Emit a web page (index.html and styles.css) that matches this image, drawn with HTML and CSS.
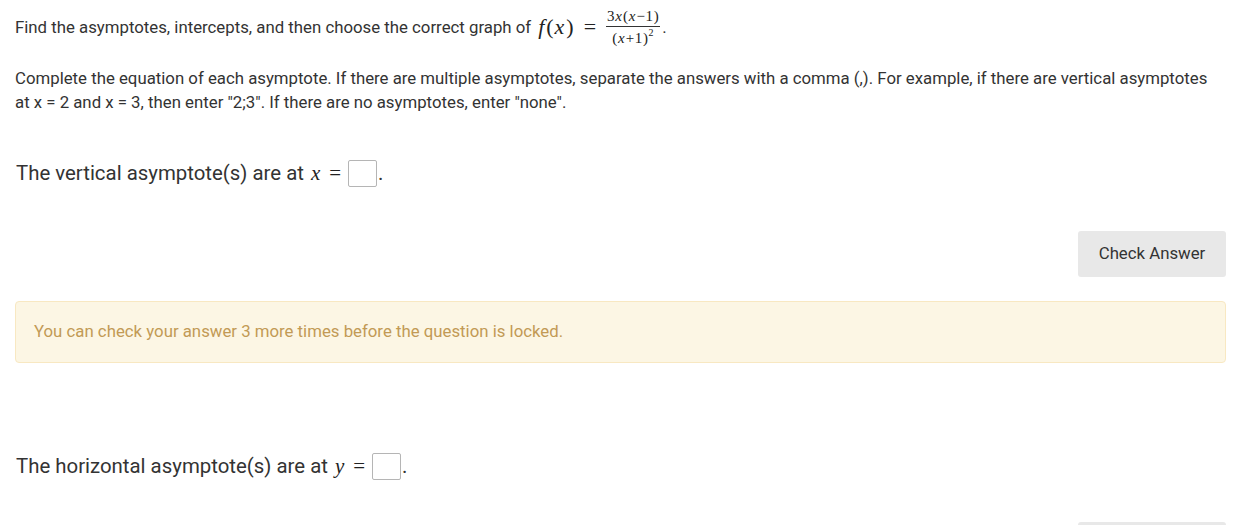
FILE: index.html
```html
<!DOCTYPE html>
<html>
<head>
<meta charset="utf-8">
<link rel="stylesheet" href="styles.css">
</head>
<body>
<div class="page">
  <p class="intro">Find the asymptotes, intercepts, and then choose the correct graph of <span class="math"><i>f</i><span class="paren">(</span><i>x</i><span class="paren">)</span><span class="eq">=</span><span class="frac"><span class="num">3<i>x</i>(<i>x</i>−1)</span><span class="den">(<i>x</i>+1)<sup>2</sup></span></span></span>.</p>

  <p class="instr">Complete the equation of each asymptote. If there are multiple asymptotes, separate the answers with a comma (,). For example, if there are vertical asymptotes at x = 2 and x = 3, then enter "2;3". If there are no asymptotes, enter "none".</p>

  <div class="question">The vertical asymptote(s) are at <span class="qmath"><i>x</i><span class="eq">=</span></span><span class="box"></span>.</div>

  <div class="actions"><button class="btn">Check Answer</button></div>

  <div class="alert">You can check your answer 3 more times before the question is locked.</div>

  <div class="question q2">The horizontal asymptote(s) are at <span class="qmath"><i>y</i><span class="eq">=</span></span><span class="box"></span>.</div>

  <div class="actions a2"><button class="btn">Check Answer</button></div>
</div>
</body>
</html>
```

FILE: styles.css
```css
html, body {
  margin: 0;
  padding: 0;
  background: #fff;
  overflow: hidden;
}
.page {
  padding: 0 19px 0 15px;
  font-family: Roboto, "Liberation Sans", sans-serif;
  color: #333;
  font-size: 16.8px;
  line-height: 24px;
}
.intro {
  margin: 0;
  padding-top: 9px;
  height: 36px;
  display: flex;
  align-items: center;
  white-space: nowrap;
}
.math {
  font-family: "Liberation Serif", "DejaVu Serif", serif;
  font-size: 22px;
  display: inline-flex;
  align-items: center;
  margin-left: 7px;
  color: #222;
}
.math i, .qmath i {
  font-style: italic;
}
.math .paren {
  margin: 0 1px;
}
.math i {
  letter-spacing: 1px;
}
.eq {
  margin: 0 10px 0 9px;
}
.frac {
  display: inline-flex;
  flex-direction: column;
  align-items: center;
  font-size: 15px;
  line-height: 16px;
  margin-right: 2px;
  letter-spacing: 0.6px;
}
.frac i {
  letter-spacing: 1.2px;
}
.num {
  padding: 0 1px 2px;
  border-bottom: 1px solid #333;
}
.den {
  padding-top: 3px;
}
.den sup {
  font-size: 10px;
  line-height: 0;
  vertical-align: 7px;
}
.instr {
  margin: 21px 0 0;
  line-height: 24px;
}
.question {
  margin-top: 45px;
  font-size: 20.4px;
  line-height: 28px;
  display: flex;
  align-items: center;
  padding-left: 1px;
}
.qmath {
  font-family: "Liberation Serif", "DejaVu Serif", serif;
  font-size: 21px;
  margin-left: 7px;
  color: #222;
}
.qmath i {
  letter-spacing: 1px;
}
.qmath .eq {
  margin: 0 7px 0 8px;
}
.box {
  display: inline-block;
  width: 27px;
  height: 25px;
  border: 1px solid #b5b5b5;
  border-radius: 2px;
  margin-right: 1px;
  background: #fff;
}
.actions {
  display: flex;
  justify-content: flex-end;
  margin-top: 44px;
}
.btn {
  font-family: Roboto, "Liberation Sans", sans-serif;
  font-size: 16.8px;
  color: #333;
  background: #e8e8e8;
  border: none;
  border-radius: 3px;
  width: 148px;
  height: 46px;
  padding: 0 0 2px;
}
.alert {
  margin-top: 24px;
  height: 62px;
  box-sizing: border-box;
  padding: 17px 18px 19px;
  background: #fcf6e4;
  border: 1px solid #f8e8c2;
  border-radius: 4px;
  color: #c29a55;
  line-height: 24px;
}
.q2 {
  margin-top: 89px;
}
.a2 {
  margin-top: 42px;
}
```
